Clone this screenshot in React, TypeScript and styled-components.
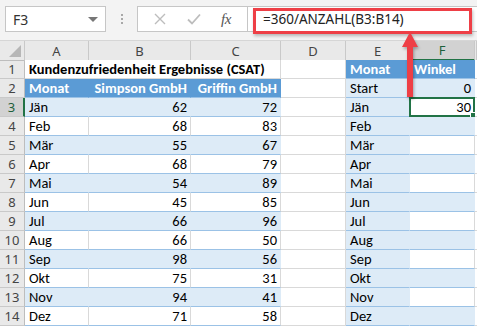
import React from "react";
import styled, { createGlobalStyle } from "styled-components";

const GlobalStyle = createGlobalStyle`
  html, body {
    margin: 0;
    padding: 0;
    background: #fff;
    overflow: hidden;
  }
  * {
    box-sizing: border-box;
  }
`;

const CELL_FONT = `"Carlito", "Lato", "Liberation Sans", sans-serif`;
const UI_FONT = `"Noto Sans", "Liberation Sans", sans-serif`;

const Sheet = styled.div`
  position: relative;
  width: 477px;
  height: 326px;
  overflow: hidden;
  font-family: ${CELL_FONT};
`;

const ToolBar = styled.div`
  height: 41px;
  display: flex;
  align-items: flex-start;
  padding: 6px 0 0 5px;
  background: #f3f3f3;
  border-bottom: 1px solid #d6d6d6;
`;

const NameBox = styled.div`
  width: 101px;
  height: 26px;
  display: flex;
  align-items: center;
  justify-content: space-between;
  padding: 0 7px 0 7px;
  background: #fff;
  border: 1px solid #c6c6c6;
  font-family: ${UI_FONT};
  font-size: 14px;
  color: #333;
`;

const DropArrow = styled.span`
  width: 0;
  height: 0;
  border-left: 5px solid transparent;
  border-right: 5px solid transparent;
  border-top: 5px solid #777;
  margin-top: 1px;
`;

const Grip = styled.div`
  width: 31px;
  height: 26px;
  display: flex;
  flex-direction: column;
  align-items: center;
  justify-content: center;
  gap: 2px;

  span {
    width: 2px;
    height: 2px;
    background: #a8a8a8;
  }
`;

const FxBox = styled.div`
  width: 110px;
  height: 26px;
  display: flex;
  align-items: center;
  justify-content: space-around;
  padding: 0 6px;
  background: #fff;
  border: 1px solid #c6c6c6;
  border-right: none;
`;

const FxLabel = styled.span`
  font-family: "Liberation Serif", serif;
  font-style: italic;
  font-size: 15px;
  color: #555;
  letter-spacing: -0.5px;
`;

const FormulaBox = styled.div`
  position: relative;
  flex: 1;
  height: 26px;
  display: flex;
  align-items: center;
  padding-left: 15px;
  background: #fff;
  border: 1px solid #c6c6c6;
  border-right: none;
  font-family: ${UI_FONT};
  font-size: 13.5px;
  color: #222;
`;

const Highlight = styled.div`
  position: absolute;
  left: 5px;
  top: 1px;
  width: 219px;
  height: 26px;
  border: 3px solid #ee3f46;
  box-shadow: 1px 2px 3px rgba(0, 0, 0, 0.25);
  pointer-events: none;
`;

const Grid = styled.div`
  display: grid;
  grid-template-columns: 25px 64px 102px 90px 65px 64px 65px 2px;
  grid-auto-rows: 19px;
  font-size: 14.5px;
`;

const ColHead = styled.div<{ $active?: boolean }>`
  height: 20px;
  display: flex;
  align-items: center;
  justify-content: center;
  background: ${(p) => (p.$active ? "#d2d2d2" : "#e9e9e9")};
  border-right: 1px solid #c9c9c9;
  border-bottom: ${(p) => (p.$active ? "2px solid #217346" : "1px solid #bdbdbd")};
  color: ${(p) => (p.$active ? "#1e5f3b" : "#444")};
  font-family: ${UI_FONT};
  font-size: 13px;
`;

const Corner = styled(ColHead)`
  position: relative;

  &::after {
    content: "";
    position: absolute;
    right: 3px;
    bottom: 3px;
    border-left: 12px solid transparent;
    border-bottom: 12px solid #b7b7b7;
  }
`;

const RowHead = styled.div<{ $active?: boolean }>`
  display: flex;
  align-items: center;
  justify-content: center;
  background: ${(p) => (p.$active ? "#d2d2d2" : "#e9e9e9")};
  border-right: ${(p) => (p.$active ? "2px solid #217346" : "1px solid #bdbdbd")};
  border-bottom: 1px solid #c9c9c9;
  color: ${(p) => (p.$active ? "#1e5f3b" : "#444")};
  font-family: ${UI_FONT};
  font-size: 13px;
`;

type Fill = "none" | "head" | "band";

const fills: Record<Fill, string> = {
  none: "#fff",
  head: "#5b9bd5",
  band: "#ddebf7",
};

const Cell = styled.div<{
  $fill?: Fill;
  $right?: boolean;
  $bold?: boolean;
  $table?: boolean;
  $span?: number;
}>`
  position: relative;
  display: flex;
  align-items: flex-end;
  justify-content: ${(p) => (p.$right ? "flex-end" : "flex-start")};
  grid-column: span ${(p) => p.$span || 1};
  padding: 0 3px 0 4px;
  white-space: nowrap;
  line-height: 18px;
  background: ${(p) => fills[p.$fill || "none"]};
  color: ${(p) => (p.$fill === "head" ? "#fff" : "#000")};
  font-weight: ${(p) => (p.$bold ? 700 : 400)};
  border-right: 1px solid
    ${(p) => (p.$fill && p.$fill !== "none" ? fills[p.$fill] : "#d9d9d9")};
  border-bottom: 1px solid ${(p) => (p.$table ? "#9bc2e6" : "#d9d9d9")};
`;

const Selected = styled.div`
  position: absolute;
  left: -1px;
  top: -1px;
  right: -1px;
  bottom: -1px;
  border: 2px solid #217346;
  pointer-events: none;

  &::after {
    content: "";
    position: absolute;
    right: -4px;
    bottom: -4px;
    width: 5px;
    height: 5px;
    background: #217346;
    border: 1px solid #fff;
  }
`;

const Arrow = styled.svg`
  position: absolute;
  left: 398px;
  top: 31px;
  overflow: visible;
  filter: drop-shadow(1px 2px 1.5px rgba(0, 0, 0, 0.3));
  pointer-events: none;
`;

const months = ["Jän", "Feb", "Mär", "Apr", "Mai", "Jun", "Jul", "Aug", "Sep", "Okt", "Nov", "Dez"];
const simpson = [62, 68, 55, 68, 54, 45, 66, 66, 98, 75, 94, 71];
const griffin = [72, 83, 67, 79, 89, 85, 96, 50, 56, 31, 41, 58];

const columns = ["A", "B", "C", "D", "E", "F"];

const XIcon = () => (
  <svg width="12" height="12" viewBox="0 0 12 12">
    <path d="M1 1L11 11M11 1L1 11" stroke="#bdbdbd" strokeWidth="1.4" fill="none" />
  </svg>
);

const CheckIcon = () => (
  <svg width="14" height="12" viewBox="0 0 14 12">
    <path d="M1 6.5L5 10.5L13 1.5" stroke="#bdbdbd" strokeWidth="1.8" fill="none" />
  </svg>
);

export default function App() {
  return (
    <Sheet>
      <GlobalStyle />
      <ToolBar>
        <NameBox>
          F3
          <DropArrow />
        </NameBox>
        <Grip>
          <span />
          <span />
          <span />
        </Grip>
        <FxBox>
          <XIcon />
          <CheckIcon />
          <FxLabel>fx</FxLabel>
        </FxBox>
        <FormulaBox>
          =360/ANZAHL(B3:B14)
          <Highlight />
        </FormulaBox>
      </ToolBar>

      <Grid>
        <Corner />
        {columns.map((c) => (
          <ColHead key={c} $active={c === "F"}>
            {c}
          </ColHead>
        ))}
        <ColHead />

        <RowHead>1</RowHead>
        <Cell $bold $span={3}>
          Kundenzufriedenheit Ergebnisse (CSAT)
        </Cell>
        <Cell />
        <Cell $fill="head" $bold $table>
          Monat
        </Cell>
        <Cell $fill="head" $bold $table>
          Winkel
        </Cell>
        <Cell />

        <RowHead>2</RowHead>
        <Cell $fill="head" $bold $table>
          Monat
        </Cell>
        <Cell $fill="head" $bold $table $right>
          Simpson GmbH
        </Cell>
        <Cell $fill="head" $bold $table $right>
          Griffin GmbH
        </Cell>
        <Cell />
        <Cell $fill="band" $table>
          Start
        </Cell>
        <Cell $fill="band" $table $right>
          0
        </Cell>
        <Cell />

        {months.map((m, i) => {
          const row = i + 3;
          const band: Fill = row % 2 === 1 ? "band" : "none";
          const fBand: Fill = row % 2 === 0 ? "band" : "none";
          return (
            <React.Fragment key={m}>
              <RowHead $active={row === 3}>{row}</RowHead>
              <Cell $fill={band} $table>
                {m}
              </Cell>
              <Cell $fill={band} $table $right>
                {simpson[i]}
              </Cell>
              <Cell $fill={band} $table $right>
                {griffin[i]}
              </Cell>
              <Cell />
              <Cell $fill="band" $table>
                {m}
              </Cell>
              <Cell $fill={fBand} $table $right>
                {row === 3 ? "30" : ""}
                {row === 3 && <Selected />}
              </Cell>
              <Cell />
            </React.Fragment>
          );
        })}
      </Grid>

      <Arrow width="24" height="68" viewBox="0 0 24 68">
        <path d="M12 1L20 16H15V66H9V16H4Z" fill="#ee3f46" />
      </Arrow>
    </Sheet>
  );
}
